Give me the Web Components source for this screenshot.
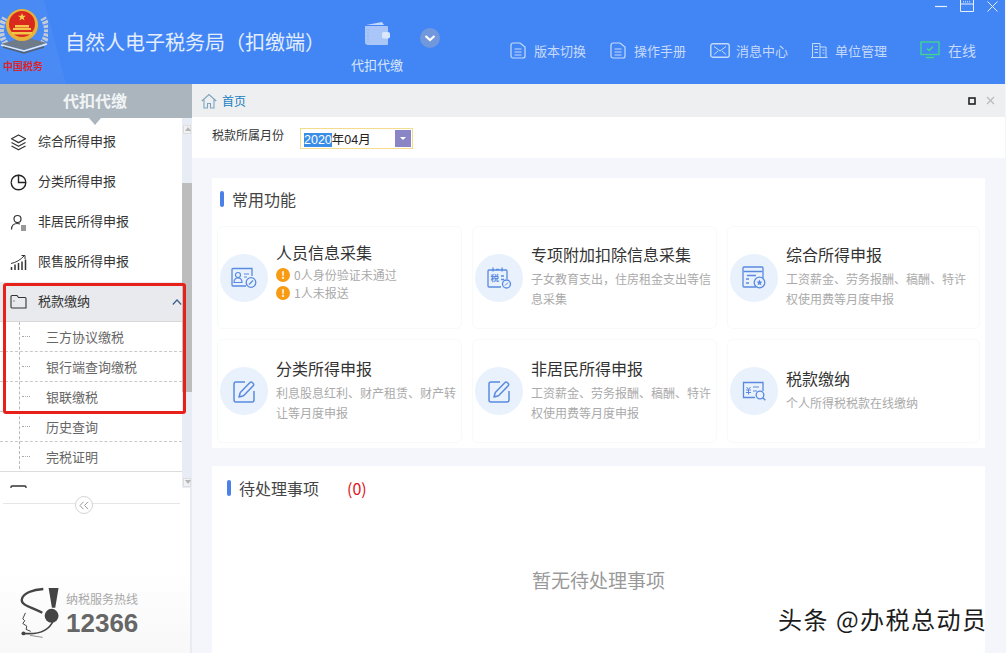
<!DOCTYPE html>
<html lang="zh">
<head>
<meta charset="utf-8">
<title>自然人电子税务局（扣缴端）</title>
<style>
  html, body { margin: 0; height: 100%; overflow: hidden; background: #fff; }
  body { font-family: "Noto Sans CJK SC", "Noto Sans", sans-serif; }
</style>
</head>
<body>
<tax-app></tax-app>
<script>
const sv = (w, h, vb, body, extra = '') => `<svg width="${w}" height="${h}" viewBox="${vb}" fill="none" ${extra}>${body}</svg>`;

const ICONS = {
  doc: sv(16, 17, '0 0 16 17', '<path d="M1 3a2 2 0 0 1 2-2h7l5 4v9a2 2 0 0 1-2 2H3a2 2 0 0 1-2-2z M4.500 7h7 M4.500 10h7 M4.500 13h7" stroke="#c4dcfa" stroke-width="1.200"/>'),
  mail: sv(20, 15, '0 0 20 15', '<rect x=".8" y=".8" width="18.400" height="13.400" rx="2" stroke="#c4dcfa" stroke-width="1.400"/><path d="M4 3.500l6 4.500 6-4.500M4 11.500l4-3.500M16 11.500l-4-3.500" stroke="#c4dcfa"/>'),
  org: sv(18, 16, '0 0 18 16', '<path d="M1 15.500h16.500M2.500 15V1.500h7.500V15M10 5h6v10M4.500 4.500h3.500M4.500 7.500h3.500M4.500 10.500h3.500M12.500 8h2M12.500 11h2" stroke="#c4dcfa"/>'),
  screen: sv(20, 18, '0 0 20 18', '<rect x="1" y="1" width="18" height="12.500" stroke="#3fd98a" stroke-width="1.300"/><path d="M7 7.500l2.200 2L13 5.500" stroke="#3fd98a" stroke-width="1.300"/><path d="M6 16.500h8" stroke="#3fd98a" stroke-width="1.500"/>'),
  layers: sv(17, 17, '0 0 17 17', '<path d="M8.500 1l7 3.800-7 3.800-7-3.800zM1.500 8.500l7 3.800 7-3.800M1.500 12l7 3.800 7-3.800" stroke="#333" stroke-width="1.200" stroke-linejoin="round"/>'),
  pie: sv(17, 17, '0 0 17 17', '<path d="M8.500 1.200a7.300 7.300 0 1 1-7.300 7.300" stroke="#222" stroke-width="1.400"/><path d="M1.200 8.500a7.300 7.300 0 0 1 7.300-7.300V8.500H15.800" stroke="#222" stroke-width="1.400"/>'),
  person: sv(17, 17, '0 0 17 17', '<circle cx="7.500" cy="5" r="3.500" stroke="#333" stroke-width="1.200"/><path d="M1.500 15.500c0-3.800 2.500-6 6-6 1 0 1.800.2 2.500.5" stroke="#333" stroke-width="1.200"/><path d="M11 12h5M11 14h5M11 16h5" stroke="#333"/>'),
  chart: sv(17, 17, '0 0 17 17', '<path d="M1.500 16v-3M5 16v-5.500M8.500 16V9M12 16V7.500M15.500 16V5.500" stroke="#333" stroke-width="1.500"/><path d="M1 9.500C6 8.500 10.500 6 14.500 1.500M11.500 1.500h3.500V5" stroke="#333"/>'),
  folder: sv(17, 15, '0 0 17 15', '<path d="M1 13V2.500a1 1 0 0 1 1-1h5l1.500 2H15a1 1 0 0 1 1 1V14H2a1 1 0 0 1-1-1z" stroke="#333" stroke-width="1.100"/><path d="M3.500 7h1" stroke="#333"/>'),
  box: sv(17, 15, '0 0 17 15', '<path d="M1 14V2a1 1 0 0 1 1-1h13a1 1 0 0 1 1 1v12" stroke="#333" stroke-width="1.300"/>'),
  card: sv(26, 22, '0 0 26 22', '<path d="M21 9V1.500H2a1 1 0 0 0-1 1V18a1 1 0 0 0 1 1h13" stroke="#5a8ae0" stroke-width="1.300"/><circle cx="7" cy="8" r="2.500" stroke="#5a8ae0" stroke-width="1.200"/><path d="M3 15.500c0-3 1.800-4.500 4-4.500s4 1.500 4 4.500z M13 7h5M13 10h3" stroke="#5a8ae0" stroke-width="1.200"/><circle cx="20" cy="15.500" r="4.800" stroke="#5a8ae0" stroke-width="1.300"/><path d="M18 17.500l4-4" stroke="#5a8ae0" stroke-width="1.300"/>'),
  receipt: sv(26, 24, '0 0 26 24', '<path d="M15 21H3a1 1 0 0 1-1-1V5a1 1 0 0 1 1-1h17a1 1 0 0 1 1 1v8" stroke="#5a8ae0" stroke-width="1.300"/><path d="M7 1.500v4M16 1.500v4M10 3.500h3" stroke="#5a8ae0" stroke-width="1.300"/><text x="4.500" y="15" font-size="8.500" font-weight="700" fill="#5a8ae0" font-family="Noto Sans CJK SC">税</text><path d="M15 10h3M15 13.500h3" stroke="#5a8ae0" stroke-width="1.300"/><circle cx="20.500" cy="18" r="4" stroke="#5a8ae0" stroke-width="1.300"/><path d="M19 19.500l3-3" stroke="#5a8ae0"/>'),
  form: sv(24, 23, '0 0 24 23', '<path d="M14 21H2a1 1 0 0 1-1-1V2a1 1 0 0 1 1-1h18a1 1 0 0 1 1 1v10" stroke="#5a8ae0" stroke-width="1.300"/><path d="M1.500 5.500h19M5 9.500h9M4 13h3M4 17h3" stroke="#5a8ae0" stroke-width="1.300"/><circle cx="17.500" cy="16.500" r="5.300" stroke="#5a8ae0" stroke-width="1.300"/><path d="M17.500 13.500l.9 2 2 .2-1.500 1.400.4 2.100-1.800-1-1.800 1 .4-2.100-1.500-1.400 2-.2z" fill="#5a8ae0"/>'),
  edit: sv(23, 23, '0 0 23 23', '<path d="M12 2H3a2 2 0 0 0-2 2v16a2 2 0 0 0 2 2h16a2 2 0 0 0 2-2v-9" stroke="#5a8ae0" stroke-width="1.500"/><path d="M6 17l1.300-4.500L17 2.500a1.500 1.500 0 0 1 2.200 0l1 1a1.500 1.500 0 0 1 0 2.200L10.500 15.700z" stroke="#5a8ae0" stroke-width="1.500" stroke-linejoin="round"/>'),
  search: sv(24, 20, '0 0 24 20', '<path d="M21 10V1.500H1.500v15H13" stroke="#5a8ae0" stroke-width="1.300"/><path d="M4.500 6l2 2.500 2-2.500M4 9h5M4 11.500h5M6.500 8.500v5M11 6h6M11 10h4" stroke="#5a8ae0"/><circle cx="18" cy="14" r="3.800" stroke="#5a8ae0" stroke-width="1.300"/><path d="M20.800 16.800l2.500 2.500" stroke="#5a8ae0" stroke-width="1.400"/>')
};

class TaxApp extends HTMLElement {
  constructor() {
    super();
    this.attachShadow({ mode: 'open' }).innerHTML = `
      <style>
        :host { display: flex; flex-direction: column; width: 1006px; height: 653px; overflow: hidden; position: relative; box-sizing: border-box; border-right: 1px solid #f4f6fb; }
        .body { display: flex; flex: 1; min-height: 0; }
        .mark { position: absolute; left: 778px; top: 602px; font-size: 24px; line-height: 34px; letter-spacing: 1.500px; color: #1c1c1c; white-space: nowrap; text-shadow: 1px 1px 0 #fff, -1px 0 0 #fff; }
      </style>
      <tax-header></tax-header>
      <div class="body">
        <tax-sidebar></tax-sidebar>
        <tax-main></tax-main>
      </div>
      <div class="mark">头条 @办税总动员</div>`;
  }
}

class TaxHeader extends HTMLElement {
  constructor() {
    super();
    this.attachShadow({ mode: 'open' }).innerHTML = `
      <style>
        :host { display: flex; align-items: stretch; height: 84px; background: #4285f5; color: #dce8fc; position: relative; flex: none; }
        :host::before { content: ""; position: absolute; inset: 0 auto 0 0; width: 66px; background: #4a8af5; clip-path: polygon(0 0, 44px 0, 66px 84px, 0 84px); }
        .logo { width: 65px; flex: none; display: flex; flex-direction: column; align-items: flex-start; padding-top: 4px; box-sizing: border-box; position: relative; }
        .logo svg { display: block; }
        .logo span { font-size: 10px; line-height: 12px; font-weight: 700; color: #d8262c; margin: 2px 0 0 3px; white-space: nowrap; }
        h1 { margin: 0; font-weight: 400; font-size: 20px; line-height: 28px; width: 286px; flex: none; padding-top: 28px; white-space: nowrap; color: #e3edfd; position: relative; }
        .module { width: 52px; flex: none; display: flex; flex-direction: column; align-items: center; padding-top: 21px; box-sizing: border-box; font-size: 13px; color: #dce8fc; }
        .module span { margin-top: 9px; line-height: 20px; white-space: nowrap; }
        .more { flex: none; width: 20px; height: 20px; margin: 28px 0 0 17px; }
        .links { display: flex; margin-left: 70px; padding-top: 40px; align-items: flex-start; }
        .win { position: absolute; top: 0; right: 7px; display: flex; gap: 13px; }
      </style>
      <div class="logo">
        ${sv(48, 54, '0 0 48 54', `
          <path d="M6 40C-1 30 0 22 5 14M42 40c7-9 6-18 1-26" stroke="#c3ccd6" stroke-width="6" stroke-dasharray="3 1.300"/>
          <path d="M1 40l23 6 23-7-22-6z" fill="#6f7b89"/><path d="M1 41l23 6 23-7" stroke="#e2e8ef" stroke-width="1.500"/><path d="M3 43l21 6 20-6" stroke="#56616e" stroke-width="1.500"/>
          <circle cx="22" cy="21" r="16" fill="#e8b23a"/><circle cx="22" cy="20" r="13" fill="#d9281e"/>
          <path d="M22 9l1 2.800h3l-2.400 1.800.9 2.900-2.500-1.800-2.500 1.800.9-2.900-2.400-1.800h3z" fill="#f7d04a"/>
          <path d="M13 24h18v2H13zM15 21h14v2.500H15zM12 28h20v2.500H12z" fill="#f3c64a"/>`)}
        <span>中国税务</span>
      </div>
      <h1>自然人电子税务局（扣缴端）</h1>
      <div class="module">
        ${sv(27, 25, '0 0 27 25', '<path d="M2 4L18 1l2 3z" fill="#c3d8fb"/><path d="M1 5h22a1 1 0 0 1 1 1v17a1 1 0 0 1-1 1H4a3 3 0 0 1-3-3z" fill="#aac6f8"/><rect x="18" y="11" width="8" height="6.500" rx="2" fill="#dbe7fd"/><path d="M4 8v13" stroke="#8fb2f1" stroke-dasharray="2 1"/>')}
        <span>代扣代缴</span>
      </div>
      <div class="more">${sv(20, 20, '0 0 20 20', '<circle cx="10" cy="10" r="10" fill="#7198dc"/><path d="M5.500 8l4.500 4 4.500-4" stroke="#fff" stroke-width="2.200"/>')}</div>
      <div class="links">
        <header-link icon="doc" label="版本切换" w="100"></header-link>
        <header-link icon="doc" label="操作手册" w="100"></header-link>
        <header-link icon="mail" label="消息中心" w="100" g="6"></header-link>
        <header-link icon="org" label="单位管理" w="110" g="7"></header-link>
        <header-link icon="screen" label="在线" w="60" big></header-link>
      </div>
      <div class="win">
        ${sv(12, 12, '0 0 12 12', '<path d="M0 6.500h12" stroke="#e8f0fe" stroke-width="1.200"/>')}
        ${sv(14, 12, '0 0 14 12', '<path d="M.5 0v11.500h13V0M.5 4h13" stroke="#e8f0fe"/><path d="M3 1.800h8" stroke="#e8f0fe" stroke-dasharray="1 1"/>')}
        ${sv(11, 12, '0 0 11 12', '<path d="M.5 1.500l10 10M10.500 1.500l-10 10" stroke="#e8f0fe"/>')}
      </div>`;
  }
}

class HeaderLink extends HTMLElement {
  connectedCallback() {
    const big = this.hasAttribute('big');
    this.attachShadow({ mode: 'open' }).innerHTML = `
      <style>
        :host { display: flex; align-items: center; height: 20px; flex: none; width: ${this.getAttribute('w')}px; gap: ${this.getAttribute('g') || 8}px; font-size: ${big ? 14 : 13}px; color: #c6dafb; white-space: nowrap; }
        svg { display: block; flex: none; }
      </style>
      ${ICONS[this.getAttribute('icon')]}<span>${this.getAttribute('label')}</span>`;
  }
}

class TaxSidebar extends HTMLElement {
  constructor() {
    super();
    this.attachShadow({ mode: 'open' }).innerHTML = `
      <style>
        :host { display: flex; flex-direction: column; width: 192px; flex: none; position: relative; background: linear-gradient(#fff 85%, #f8f8f8); box-sizing: border-box; }
        .title { height: 34px; flex: none; background: #abb5bd; color: #f1f4f6; font-size: 16px; font-weight: 700; line-height: 32px; text-align: center; position: relative; padding-right: 2px; box-sizing: border-box; }
        .title::after { content: ""; position: absolute; left: 89px; top: 34px; border: 6px solid transparent; border-top: 7px solid #abb5bd; border-bottom: 0; }
        .menu { display: flex; height: 370px; flex: none; overflow: hidden; }
        .list { flex: 1; min-width: 0; overflow: hidden; padding-top: 4px; }
        .bar { width: 10px; flex: none; display: flex; flex-direction: column; background: #e8ecf4; }
        .bar i { display: block; height: 9px; margin: 7px 1px 0; background: #f2f2f2; border: 1px solid #ddd; box-sizing: border-box; position: relative; }
        .bar i::after { content: ""; position: absolute; left: 1px; top: 1px; border: 3px solid transparent; border-bottom: 4px solid #b5b5b5; border-top: 0; }
        .bar i.down { margin: auto 1px 1px; }
        .bar i.down::after { border-top: 4px solid #b5b5b5; border-bottom: 0; }
        .bar b { display: block; height: 209px; margin-top: 49px; background: #bdbdbd; }
        .sub { position: relative; }
        .sub::before { content: ""; position: absolute; left: 19px; top: 0; bottom: 3px; border-left: 1px dashed #b9b9b9; }
        .collapse { height: 30px; flex: none; position: relative; border-right: 2px solid #e9ebf3; box-sizing: border-box; }
        .collapse::before { content: ""; position: absolute; left: 3px; right: 10px; top: 15px; border-top: 1px solid #e6e6e6; }
        .collapse span { position: absolute; left: 75px; top: 8px; width: 18px; height: 18px; border-radius: 50%; border: 1px solid #d4d4d4; background: #fff; display: flex; align-items: center; justify-content: center; box-sizing: border-box; }
        .red { position: absolute; left: 3px; top: 199px; width: 183px; height: 131px; border: 3px solid #e8201a; border-radius: 3px; box-sizing: border-box; }
      </style>
      <div class="title">代扣代缴</div>
      <div class="menu">
        <div class="list">
          <nav-item icon="layers" label="综合所得申报"></nav-item>
          <nav-item icon="pie" label="分类所得申报"></nav-item>
          <nav-item icon="person" label="非居民所得申报"></nav-item>
          <nav-item icon="chart" label="限售股所得申报"></nav-item>
          <nav-item icon="folder" label="税款缴纳" open></nav-item>
          <div class="sub">
            <sub-item label="三方协议缴税"></sub-item>
            <sub-item label="银行端查询缴税"></sub-item>
            <sub-item label="银联缴税"></sub-item>
            <sub-item label="历史查询"></sub-item>
            <sub-item label="完税证明" last></sub-item>
          </div>
          <nav-item icon="box" label=""></nav-item>
        </div>
        <div class="bar"><i></i><b></b><i class="down"></i></div>
      </div>
      <div class="collapse"><span>${sv(10, 9, '0 0 10 9', '<path d="M4.500 .8L1 4.500l3.500 3.700M9 .8L5.500 4.500 9 8.200" stroke="#9a9a9a"/>')}</span></div>
      <hotline-box></hotline-box>
      <div class="red"></div>`;
  }
}

class NavItem extends HTMLElement {
  connectedCallback() {
    const open = this.hasAttribute('open');
    this.attachShadow({ mode: 'open' }).innerHTML = `
      <style>
        :host { display: flex; align-items: center; height: 40px; box-sizing: border-box; padding-left: 10px; gap: 11px; font-size: 13px; color: #333; white-space: nowrap; ${open ? 'background: #e8eaee; border-bottom: 1px solid #d8d8d8;' : ''} }
        svg { display: block; flex: none; }
        .label { flex: 1; padding-bottom: 3px; }
      </style>
      ${ICONS[this.getAttribute('icon')]}
      <span class="label">${this.getAttribute('label')}</span>
      ${open ? sv(10, 6, '0 0 10 6', '<path d="M.8 5.500L5 1l4.200 4.500" stroke="#3a5f8f" stroke-width="1.200"/>') : ''}`;
  }
}

class SubItem extends HTMLElement {
  connectedCallback() {
    const last = this.hasAttribute('last');
    this.attachShadow({ mode: 'open' }).innerHTML = `
      <style>
        :host { display: flex; align-items: center; height: 30px; box-sizing: border-box; padding-left: 22px; font-size: 13px; color: #666; white-space: nowrap; border-bottom: 1px ${last ? 'solid #dcdcdc' : 'dashed #c9c9c9'}; }
        i { width: 8px; border-top: 1px dotted #aaa; margin-right: 16px; }
      </style>
      <i></i><span>${this.getAttribute('label')}</span>`;
  }
}

class HotlineBox extends HTMLElement {
  constructor() {
    super();
    this.attachShadow({ mode: 'open' }).innerHTML = `
      <style>
        :host { display: flex; flex: 1; padding: 69px 0 0 20px; gap: 6px; box-sizing: border-box; border-right: 2px solid #e9ebf3; }
        .txt { display: flex; flex-direction: column; padding-top: 3px; }
        .t { font-size: 12px; line-height: 17px; color: #a8a8a8; white-space: nowrap; }
        .n { font-family: "Liberation Sans", sans-serif; font-weight: 700; font-size: 26px; line-height: 28px; margin-top: 2px; color: #666; }
        svg { display: block; flex: none; }
      </style>
      ${sv(40, 53, '60 200 120 160', `
        <path d="M146 203h30l-10 60h-10z" fill="#444"/><circle cx="155" cy="287" r="21" fill="#444"/>
        <path d="M130 206c-30 2-62 12-65 32-2 18 30 22 62 40" stroke="#444" stroke-width="7"/>
        <path d="M76 278l-8 18 6 6-6 8 12 8-2 10 14 6" stroke="#444" stroke-width="3"/>
        <path d="M70 340c40 4 76-6 90-38" stroke="#444" stroke-width="5"/><circle cx="70" cy="340" r="6" fill="#444"/>
        <path d="M90 346l38 6" stroke="#555" stroke-width="2"/>`)}
      <div class="txt"><span class="t">纳税服务热线</span><span class="n">12366</span></div>`;
  }
}

class TaxMain extends HTMLElement {
  constructor() {
    super();
    this.attachShadow({ mode: 'open' }).innerHTML = `
      <style>
        :host { display: flex; flex-direction: column; flex: 1; min-width: 0; background: #f4f6fb; }
        .crumb { height: 33px; flex: none; background: #eeeff1; display: flex; align-items: center; padding: 0 10px 0 9px; font-size: 12px; color: #1a7ec0; gap: 5px; }
        .crumb span { flex: 1; }
        .crumb svg { display: block; }
        .tools { display: flex; align-items: center; gap: 10px; }
        .date { height: 41px; flex: none; background: #fff; display: flex; padding-left: 20px; font-size: 12px; color: #333; box-sizing: border-box; padding-top: 8px; }
        .date label { width: 88px; line-height: 20px; white-space: nowrap; }
        .wrap { padding: 20px 20px 0; display: flex; flex-direction: column; gap: 18px; }
        .panel { background: #fff; }
        .grid { display: grid; grid-template-columns: 245px 245px 253px; grid-template-rows: 103px 104px; gap: 10px; padding: 0 0 5px 5px; }
        .pending { height: 300px; display: flex; flex-direction: column; }
        .empty { font-size: 19px; color: #999; text-align: center; line-height: 28px; margin-top: 54px; }
        .num { color: #e0141c; margin-left: 28px; }
      </style>
      <div class="crumb">
        ${sv(16, 16, '0 0 16 16', '<path d="M.8 8L8 1.500 15.200 8M3 6.500V15h3.500v-4.500h3V15H13V6.500" stroke="#7fa4bd" stroke-width="1.100"/>')}
        <span>首页</span>
        <div class="tools">
          ${sv(8, 8, '0 0 8 8', '<rect x="1" y="1" width="6" height="6" stroke="#222" stroke-width="1.600"/>')}
          ${sv(9, 9, '0 0 9 9', '<path d="M1 1l7 7M8 1L1 8" stroke="#bbb" stroke-width="1.300"/>')}
        </div>
      </div>
      <div class="date"><label>税款所属月份</label><month-field></month-field></div>
      <div class="wrap">
        <div class="panel">
          <section-title style="--px: 8px; --row: 48px; --pb: 7px; --gap: 8px;">常用功能</section-title>
          <div class="grid">
            <func-card icon="card" title="人员信息采集" warn="0人身份验证未通过|1人未报送"></func-card>
            <func-card icon="receipt" title="专项附加扣除信息采集">子女教育支出，住房租金支出等信息采集</func-card>
            <func-card icon="form" title="综合所得申报">工资薪金、劳务报酬、稿酬、特许权使用费等月度申报</func-card>
            <func-card icon="edit" title="分类所得申报">利息股息红利、财产租赁、财产转让等月度申报</func-card>
            <func-card icon="edit" title="非居民所得申报">工资薪金、劳务报酬、稿酬、特许权使用费等月度申报</func-card>
            <func-card icon="search" title="税款缴纳">个人所得税税款在线缴纳</func-card>
          </div>
        </div>
        <div class="panel pending">
          <section-title style="--px: 15px; --row: 46px; --pb: 2px; --gap: 8px;">待处理事项<span class="num">(0)</span></section-title>
          <div class="empty">暂无待处理事项</div>
        </div>
      </div>`;
  }
}

class SectionTitle extends HTMLElement {
  constructor() {
    super();
    this.attachShadow({ mode: 'open' }).innerHTML = `
      <style>
        :host { display: flex; align-items: center; box-sizing: border-box; height: var(--row); padding: 0 0 var(--pb) var(--px); gap: var(--gap); font-size: 16px; color: #444; white-space: nowrap; flex: none; }
        i { width: 4px; height: 16px; border-radius: 2px; background: #4a80e8; flex: none; }
      </style>
      <i></i><span><slot></slot></span>`;
  }
}

class MonthField extends HTMLElement {
  constructor() {
    super();
    this.attachShadow({ mode: 'open' }).innerHTML = `
      <style>
        :host { display: flex; align-items: center; width: 113px; height: 21px; margin-top: 3px; box-sizing: border-box; border: 1px solid #f3dc8c; padding: 1px; font-family: "Liberation Sans", "Noto Sans CJK SC", sans-serif; font-size: 12.500px; color: #222; }
        .v { flex: 1; padding-left: 2px; white-space: nowrap; }
        .s { background: #3b8ee8; color: #fff; }
        .b { width: 16px; height: 17px; background: #8a86c6; display: flex; align-items: center; justify-content: center; }
        .b i { border: 3px solid transparent; border-top: 3px solid #fff; border-bottom: 0; }
      </style>
      <span class="v"><span class="s">2020</span>年04月</span>
      <span class="b"><i></i></span>`;
  }
}

class FuncCard extends HTMLElement {
  connectedCallback() {
    const warn = this.getAttribute('warn');
    const notes = warn ? warn.split('|').map(t => `<div class="w"><b>!</b>${t}</div>`).join('') : '';
    this.attachShadow({ mode: 'open' }).innerHTML = `
      <style>
        :host { display: flex; align-items: center; box-sizing: border-box; border: 1px solid #f8f9fb; border-radius: 6px; padding-left: 2px; gap: 8px; background: #fff; }
        .ic { width: 48px; height: 48px; border-radius: 50%; background: #e8f1fc; display: flex; align-items: center; justify-content: center; flex: none; }
        svg { display: block; }
        .tx { flex: 1; min-width: 0; padding: 0 4px ${warn ? 13 : 4}px 0; }
        h3 { margin: 0 0 ${warn ? 2 : 3}px; font-weight: 400; font-size: 16px; line-height: 24px; color: #333; white-space: nowrap; }
        p { margin: 0; font-size: 12px; line-height: 20px; color: #aaa; }
        .w { display: flex; align-items: center; font-size: 12px; line-height: 18px; color: #aaa; white-space: nowrap; }
        .w b { width: 14px; height: 14px; border-radius: 50%; background: #f89a12; color: #fff; font-size: 10px; line-height: 14px; text-align: center; margin-right: 4px; flex: none; }
      </style>
      <div class="ic">${ICONS[this.getAttribute('icon')]}</div>
      <div class="tx">
        <h3>${this.getAttribute('title')}</h3>
        ${notes || '<p><slot></slot></p>'}
      </div>`;
  }
}

customElements.define('tax-app', TaxApp);
customElements.define('tax-header', TaxHeader);
customElements.define('header-link', HeaderLink);
customElements.define('tax-sidebar', TaxSidebar);
customElements.define('nav-item', NavItem);
customElements.define('sub-item', SubItem);
customElements.define('hotline-box', HotlineBox);
customElements.define('tax-main', TaxMain);
customElements.define('section-title', SectionTitle);
customElements.define('month-field', MonthField);
customElements.define('func-card', FuncCard);
</script>
</body>
</html>
